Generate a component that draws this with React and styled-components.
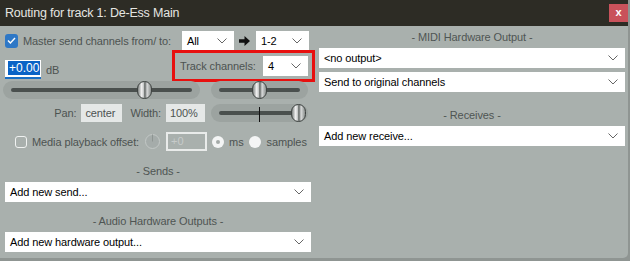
import styled, { createGlobalStyle } from 'styled-components'

const Global = createGlobalStyle`
  html, body {
    margin: 0;
    padding: 0;
    background: #8f9592;
    font-family: "Liberation Sans", Arial, sans-serif;
  }
`

const Window = styled.div`
  width: 628px;
  height: 258px;
  background: #a9b0ad;
  border-bottom-right-radius: 5px;
  overflow: hidden;
  display: flex;
  flex-direction: column;
`

const TitleBar = styled.div`
  height: 26px;
  flex: none;
  background: #2d2c25;
  display: flex;
  align-items: flex-start;
  justify-content: space-between;
`

const Title = styled.div`
  color: #e6e6e2;
  font-size: 12.5px;
  letter-spacing: -0.2px;
  line-height: 27px;
  padding-left: 5px;
`

const CloseButton = styled.div`
  width: 19px;
  height: 18px;
  margin-top: 4px;
  background: #c9525b;
  color: #fff;
  font-size: 11px;
  font-weight: bold;
  line-height: 16px;
  text-align: center;
`

const Body = styled.div`
  display: grid;
  grid-template-columns: 306px 306px;
  column-gap: 8px;
  padding-left: 5px;
`

const Column = styled.div`
  display: flex;
  flex-direction: column;
  min-width: 0;
`

const Row = styled.div`
  display: flex;
  align-items: center;
  height: ${p => p.h || 19}px;
  margin-top: ${p => p.mt || 0}px;
`

const Label = styled.span`
  color: #4d5351;
  font-size: 11px;
  letter-spacing: -0.1px;
  margin-left: ${p => p.ml || 0}px;
  white-space: nowrap;
  flex: none;
`

const Header = styled.div`
  color: #4f5553;
  font-size: 11px;
  letter-spacing: -0.1px;
  height: 14px;
  line-height: 14px;
  text-align: center;
  margin-top: ${p => p.mt || 0}px;
`

const SelectBox = styled.div`
  box-sizing: border-box;
  display: flex;
  align-items: center;
  justify-content: space-between;
  background: #fff;
  width: ${p => (p.w ? `${p.w}px` : '100%')};
  height: ${p => p.h || 20}px;
  margin-top: ${p => p.mt || 0}px;
  margin-left: ${p => (p.auto ? 'auto' : `${p.ml || 0}px`)};
  padding: 0 7px 0 5px;
  font-size: 11px;
  letter-spacing: -0.1px;
  color: #000;
  flex: none;
`

const Chevron = () => (
  <svg width="10" height="6" viewBox="0 0 10 6">
    <path d="M0.5 0.5 L5 5 L9.5 0.5" fill="none" stroke="#666" strokeWidth="1" />
  </svg>
)

const Select = ({ children, ...rest }) => (
  <SelectBox {...rest}>
    <span>{children}</span>
    <Chevron />
  </SelectBox>
)

const Checkbox = styled.div`
  box-sizing: border-box;
  width: ${p => (p.checked ? 13 : 12)}px;
  height: ${p => (p.checked ? 14 : 12)}px;
  border-radius: 3px;
  flex: none;
  margin-left: ${p => p.ml || 0}px;
  background: ${p => (p.checked ? '#2f78c6' : 'transparent')};
  border: ${p => (p.checked ? 'none' : '1.5px solid #f0f2f1')};
  display: flex;
  align-items: center;
  justify-content: center;
`

const ArrowIcon = styled.svg`
  flex: none;
  margin: 0 6px 0 5px;
`

const Arrow = () => (
  <ArrowIcon width="11" height="10" viewBox="0 0 11 10">
    <path d="M0 3.3 H5.5 V0 L11 5 L5.5 10 V6.7 H0 Z" fill="#111" />
  </ArrowIcon>
)

const GainRow = styled.div`
  display: flex;
  align-items: flex-end;
  height: 32px;
  margin-bottom: -1px;
`

const GainInput = styled.div`
  box-sizing: border-box;
  width: 36px;
  height: 19px;
  margin-bottom: 3px;
  background: #fff;
  border-bottom: 2px solid #1a6fc4;
  padding: 1px 2px 0 3px;
  font-size: 12px;
  flex: none;
`

const Selected = styled.span`
  background: #0a63c6;
  color: #fff;
  padding: 0 1px;
`

const Highlight = styled.div`
  box-sizing: border-box;
  margin-left: auto;
  margin-right: -4px;
  width: 143px;
  height: 32px;
  border: 3px solid #e8100f;
  display: flex;
  align-items: center;
  padding-left: 5px;
  flex: none;
`

const SliderGrid = styled.div`
  display: grid;
  grid-template-columns: 197px 97px;
  column-gap: 11px;
  row-gap: 5px;
  margin-left: -2px;
`

const Trough = styled.div`
  position: relative;
  height: 18px;
  border-radius: 9px;
  background: #9ca3a0;
  display: flex;
  align-items: center;
  padding: 0 8px;
`

const Line = styled.div`
  flex: 1;
  height: 4px;
  border-radius: 2px;
  background: #4a504e;
`

const Knob = styled.div`
  position: absolute;
  top: 0;
  left: ${p => p.at}px;
  width: 15px;
  height: 18px;
  box-sizing: border-box;
  border-radius: 8px;
  border: 1px solid #3e4341;
  background: linear-gradient(90deg, #7d8280 0%, #f2f2f2 28%, #bfc2c1 45%, #5b605e 52%, #d8dada 70%, #8a8f8d 100%);
`

const CenterMark = styled.div`
  position: absolute;
  left: 48px;
  top: 3px;
  width: 1px;
  height: 15px;
  background: #111;
`

const PanRow = styled.div`
  display: flex;
  align-items: center;
  justify-content: flex-end;
  margin-right: -5px;
`

const ValueBox = styled.div`
  box-sizing: border-box;
  width: ${p => p.w}px;
  height: 18px;
  background: #e5e8e7;
  font-size: 11px;
  letter-spacing: -0.1px;
  color: #4d5351;
  padding-left: 4px;
  line-height: 18px;
  margin-left: ${p => p.ml || 0}px;
  flex: none;
`

const PotIcon = styled.svg`
  flex: none;
  margin: 0 5px 0 5px;
`

const Pot = () => (
  <PotIcon width="17" height="15" viewBox="0 0 17 15">
    <circle cx="8.5" cy="7.5" r="7" fill="#a5acaa" stroke="#c3c8c6" strokeWidth="1" />
    <line x1="8.5" y1="7.5" x2="8.5" y2="0.5" stroke="#8e9592" strokeWidth="1" />
  </PotIcon>
)

const OffsetInput = styled.div`
  box-sizing: border-box;
  width: 41px;
  height: 19px;
  border: 2px solid #e9ebea;
  font-size: 11px;
  color: #c7cbca;
  padding-left: 3px;
  line-height: 15px;
  flex: none;
`

const Radio = styled.div`
  width: 12px;
  height: 12px;
  border-radius: 50%;
  background: #f4f5f5;
  flex: none;
  margin-left: ${p => p.ml || 0}px;
  display: flex;
  align-items: center;
  justify-content: center;
  &::after {
    content: '';
    display: ${p => (p.on ? 'block' : 'none')};
    width: 4px;
    height: 4px;
    border-radius: 50%;
    background: #a4aaa8;
  }
`

export default function App() {
  return (
    <>
      <Global />
      <Window>
        <TitleBar>
          <Title>Routing for track 1: De-Ess Main</Title>
          <CloseButton>x</CloseButton>
        </TitleBar>
        <Body>
          <Column>
            <Row mt={5}>
              <Checkbox checked>
                <svg width="9" height="7" viewBox="0 0 9 7">
                  <path d="M1 3.5 L3.4 6 L8 1" fill="none" stroke="#fff" strokeWidth="1.4" />
                </svg>
              </Checkbox>
              <Label ml={5}>Master send channels from/ to:</Label>
              <Select w={52} auto>All</Select>
              <Arrow />
              <Select w={53} style={{ marginRight: 2 }}>1-2</Select>
            </Row>
            <GainRow>
              <GainInput>
                <Selected>+0.00</Selected>
              </GainInput>
              <Label ml={5} style={{ marginBottom: 6 }}>dB</Label>
              <Highlight>
                <Label>Track channels:</Label>
                <Select w={45} auto style={{ marginRight: 4 }}>4</Select>
              </Highlight>
            </GainRow>
            <SliderGrid>
              <Trough>
                <Line />
                <Knob at={134} />
              </Trough>
              <Trough>
                <Line />
                <Knob at={41} />
              </Trough>
              <PanRow>
                <Label>Pan:</Label>
                <ValueBox w={41} ml={5}>center</ValueBox>
                <Label ml={8}>Width:</Label>
                <ValueBox w={39} ml={5}>100%</ValueBox>
              </PanRow>
              <Trough>
                <Line />
                <CenterMark />
                <Knob at={80} />
              </Trough>
            </SliderGrid>
            <Row mt={10}>
              <Checkbox ml={10} />
              <Label ml={5}>Media playback offset:</Label>
              <Pot />
              <OffsetInput>+0</OffsetInput>
              <Radio on ml={5} />
              <Label ml={5}>ms</Label>
              <Radio ml={5} />
              <Label ml={6}>samples</Label>
            </Row>
            <Header mt={13}>- Sends -</Header>
            <Select mt={4}>Add new send...</Select>
            <Header mt={12}>- Audio Hardware Outputs -</Header>
            <Select mt={4}>Add new hardware output...</Select>
          </Column>
          <Column>
            <Header mt={4}>- MIDI Hardware Output -</Header>
            <Select mt={4}>&lt;no output&gt;</Select>
            <Select mt={4}>Send to original channels</Select>
            <Header mt={16}>- Receives -</Header>
            <Select mt={4}>Add new receive...</Select>
          </Column>
        </Body>
      </Window>
    </>
  )
}
